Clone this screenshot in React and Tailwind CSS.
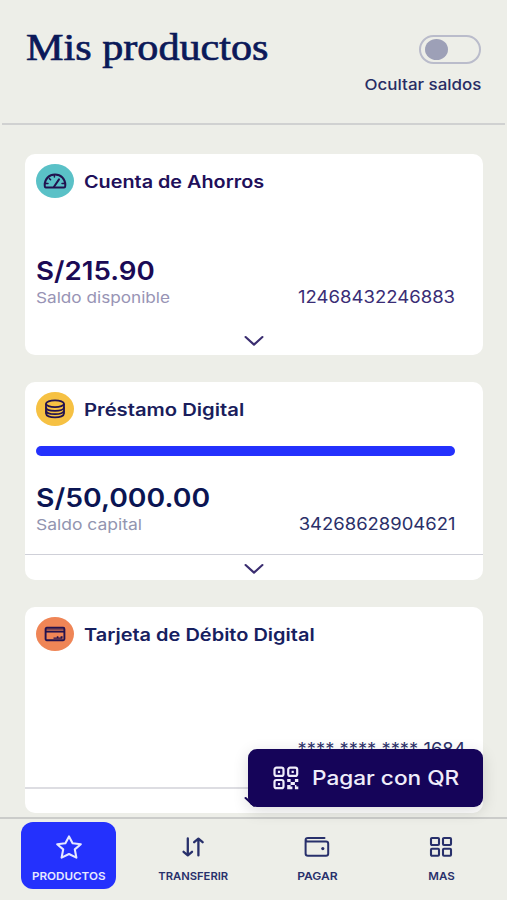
function Chevron() {
  return (
    <svg className="w-[20px] h-[12px]" fill="none" viewBox="0 0 20 12" stroke="currentColor">
      <path strokeLinecap="round" strokeLinejoin="round" strokeWidth={2.1} d="M1.6 2L10 9.6L18.4 2" />
    </svg>
  )
}

function GaugeIcon() {
  return (
    <svg className="w-[24px] h-[18px]" fill="none" viewBox="0 0 24 18" stroke="currentColor" strokeWidth={2} strokeLinecap="round" strokeLinejoin="round">
      <path d="M3 15.5C1.9 15.5 1.7 14.6 1.7 13C1.7 7 6 2.6 12 2.6S22.3 7 22.3 13C22.3 14.6 22.1 15.5 21 15.5Z" />
      <path d="M11 14.8L16 7.4" />
      <path d="M11.4 3.2V5M6.4 6.6L7.6 7.8M3 11.6H5M19 11.6H21" strokeWidth={1.5} />
    </svg>
  )
}

function CoinsIcon() {
  return (
    <svg className="w-[22px] h-[20px]" fill="none" viewBox="0 0 22 20" stroke="currentColor" strokeWidth={1.8}>
      <ellipse cx="11" cy="4.8" rx="9" ry="3.4" />
      <path d="M2 4.8V14.6C2 16.8 6 18.4 11 18.4S20 16.8 20 14.6V4.8" />
      <path d="M2 8.2C2 10.4 6 11.8 11 11.8S20 10.4 20 8.2M2 11.8C2 13.8 6 15.2 11 15.2S20 13.8 20 11.8" />
    </svg>
  )
}

function CardIcon() {
  return (
    <svg className="w-[22px] h-[16px]" fill="none" viewBox="0 0 22 16" stroke="currentColor" strokeWidth={1.9}>
      <rect x="1.6" y="1.7" width="18.8" height="12.6" rx="1.2" />
      <path d="M1.6 5.6H20.4" />
      <path d="M1.6 3.4H20.4" strokeWidth={1} strokeOpacity={0.6} />
      <path d="M9.5 12.2H18.5M12.8 10.9H14.4M16.6 10.9H18.6" strokeWidth={1.3} />
    </svg>
  )
}

function QrIcon() {
  return (
    <svg className="w-[26px] h-[24px] shrink-0" viewBox="0 0 26 24" fill="none" stroke="currentColor" strokeWidth={2.2}>
      <rect x="1.5" y="1.7" width="9" height="8.2" rx="2" />
      <rect x="15.2" y="1.7" width="9" height="8.2" rx="2" />
      <rect x="1.5" y="14" width="9" height="8.2" rx="2" />
      <path d="M4.9 5.8H7.1M18.6 5.8H20.8M4.9 18.1H7.1" />
      <path
        d="M14.2 13H17.6V16H14.2ZM21.9 13H25.3V16H21.9ZM17.6 16H21.9V19H17.6ZM14.2 19H17.6V20.6H19.4V23.2H14.2ZM21.9 19H23.4V20.6H25.3V23.2H21.9Z"
        fill="currentColor"
        stroke="none"
      />
    </svg>
  )
}

function StarIcon() {
  return (
    <svg className="w-[28px] h-[26px]" fill="none" viewBox="0 0 28 26" stroke="currentColor">
      <path strokeLinejoin="round" strokeWidth={2.1}
        d="M14 2.4L17.6 9.2L25.8 10.3L19.8 15.4L21.4 23.6L14 20L6.6 23.6L8.2 15.4L2.2 10.3L10.4 9.2Z" />
    </svg>
  )
}

function TransferIcon() {
  return (
    <svg className="w-[22px] h-[20px]" fill="none" viewBox="0 0 22 20" stroke="currentColor">
      <path strokeLinecap="round" strokeLinejoin="round" strokeWidth={2.3}
        d="M5.8 1.4V18M1.6 14.8L5.8 18.4L10 14.8M16.4 18.4V1.8M12.2 5.2L16.4 1.6L20.6 5.2" />
    </svg>
  )
}

function WalletIcon() {
  return (
    <svg className="w-[26px] h-[22px]" fill="none" viewBox="0 0 26 22" stroke="currentColor" strokeWidth={2}>
      <path strokeLinecap="round" strokeLinejoin="round"
        d="M20.5 2H4C2.5 2 1.6 2.8 1.6 4V17.5C1.6 19 2.5 19.8 4 19.8H22C23.4 19.8 24.2 19 24.2 17.8V7.5C24.2 6.2 23.4 5.5 22 5.5H3.8C2.4 5.5 1.6 5 1.6 3.8" />
      <circle cx="18.8" cy="12.6" r="1.6" fill="currentColor" stroke="none" />
    </svg>
  )
}

function GridIcon() {
  return (
    <svg className="w-[24px] h-[22px]" fill="none" viewBox="0 0 24 22" stroke="currentColor" strokeWidth={2.1}>
      <rect x="2" y="2" width="8" height="7" rx="1" />
      <rect x="14" y="2" width="8" height="7" rx="1" />
      <rect x="2" y="12.8" width="8" height="7" rx="1" />
      <rect x="14" y="12.8" width="8" height="7" rx="1" />
    </svg>
  )
}

function CardHeader({ color, icon, title, titleClass }) {
  return (
    <div className="flex items-center gap-[10px] pl-[11px] pt-[10px]">
      <div className={`w-[38px] h-[34px] rounded-[50%] flex items-center justify-center shrink-0 text-[#22124f] ${color}`}>
        {icon}
      </div>
      <h2 className={`pt-[2px] text-[17px] leading-[24px] font-semibold whitespace-nowrap origin-left ${titleClass}`}>{title}</h2>
    </div>
  )
}

function NavItem({ icon, label, active, labelClass }) {
  return (
    <button className="flex-1 flex justify-center">
      <span
        className={`w-[95px] h-[67px] rounded-[12px] flex flex-col items-center pt-[11px] ${
          active ? "bg-[#2431fd] text-[#e6e8ff]" : "text-[#28306b]"
        }`}
      >
        <span className="h-[28px] flex items-center justify-center">{icon}</span>
        <span className={`mt-[8px] text-[11px] leading-[14px] font-semibold whitespace-nowrap ${labelClass}`}>{label}</span>
      </span>
    </button>
  )
}

export default function App() {
  return (
    <div className="relative w-[507px] h-[900px] overflow-hidden flex flex-col bg-[#edeee8] font-['Inter',sans-serif] text-[#1c1259]">
      <header className="h-[125px] shrink-0 mx-[2px] border-b-2 border-[#d0d1d1] flex justify-between pl-[24px] pr-[24px]">
        <h1 className="mt-[24px] text-[38px] leading-[46px] font-['Liberation_Serif',serif] text-[#0b1959] whitespace-nowrap origin-left scale-x-[1.11] h-[46px] [-webkit-text-stroke:0.7px_#0b1959]">
          Mis productos
        </h1>
        <div className="flex flex-col items-end pt-[35px]">
          <div className="w-[62px] h-[29px] rounded-full border-2 border-[#babccb] flex items-center pl-[4px]">
            <div className="w-[23px] h-[21px] rounded-[50%] bg-[#9da0b7]" />
          </div>
          <span className="mt-[11px] text-[15px] leading-[20px] font-medium text-[#282c64] whitespace-nowrap origin-right scale-x-[1.13]">
            Ocultar saldos
          </span>
        </div>
      </header>

      <main className="flex-1 min-h-0 overflow-hidden pl-[25px] pr-[24px] pt-[29px] flex flex-col">
        <section className="h-[201px] shrink-0 bg-white rounded-[10px]">
          <CardHeader color="bg-[#5ac1c7]" icon={<GaugeIcon />} title="Cuenta de Ahorros" titleClass="text-[#210f5a] scale-x-[1.165]" />
          <div className="mt-[57px] pl-[11px] pr-[28px]">
            <p className="text-[26px] leading-[32px] font-semibold text-[#1b0a55] w-fit origin-left scale-x-[1.065]">S/215.90</p>
            <div className="flex justify-between">
              <span className="text-[15px] leading-[22px] text-[#9894b5] origin-left scale-x-[1.145]">Saldo disponible</span>
              <span className="-mt-[1px] text-[17px] leading-[22px] text-[#3a2d75] origin-right scale-x-[1.09]">12468432246883</span>
            </div>
          </div>
          <div className="mt-[26px] flex justify-center text-[#3a2d70]">
            <Chevron />
          </div>
        </section>

        <section className="mt-[27px] h-[198px] shrink-0 bg-white rounded-[10px]">
          <CardHeader color="bg-[#f6c143]" icon={<CoinsIcon />} title="Préstamo Digital" titleClass="text-[#1a1d5c] scale-x-[1.19]" />
          <div className="mt-[20px] ml-[11px] mr-[28px] h-[10px] rounded-full bg-[#2431fd]" />
          <div className="mt-[26px] pl-[11px] pr-[28px]">
            <p className="text-[26px] leading-[32px] font-semibold text-[#0b1553] w-fit origin-left scale-x-[1.09]">S/50,000.00</p>
            <div className="flex justify-between">
              <span className="text-[15px] leading-[22px] text-[#9295b0] origin-left scale-x-[1.165]">Saldo capital</span>
              <span className="-mt-[1px] text-[17px] leading-[22px] text-[#2b3069] origin-right scale-x-[1.085]">34268628904621</span>
            </div>
          </div>
          <div className="mt-[18px] border-t border-[#cfd0d8] pt-[8px] flex justify-center text-[#3a2d70]">
            <Chevron />
          </div>
        </section>

        <section className="mt-[27px] h-[206px] shrink-0 bg-white rounded-[10px]">
          <CardHeader color="bg-[#ef8556]" icon={<CardIcon />} title="Tarjeta de Débito Digital" titleClass="text-[#16205f] scale-x-[1.175]" />
          <div className="mt-[87px] pr-[18px] flex justify-end">
            <span className="text-[17px] leading-[22px] text-[#2b3069] whitespace-nowrap origin-right scale-x-[1.08]">**** **** **** 1684</span>
          </div>
          <div className="mt-[27px] border-t-2 border-[#dddde2] pt-[7px] flex justify-center text-[#16085a]">
            <Chevron />
          </div>
        </section>
      </main>

      <nav className="h-[83px] shrink-0 border-t-2 border-[#cbccca] pl-[6.5px] pr-[3.5px] pt-[3px] flex">
        <NavItem active icon={<StarIcon />} label="PRODUCTOS" labelClass="scale-x-[1.06]" />
        <NavItem icon={<TransferIcon />} label="TRANSFERIR" labelClass="scale-x-[1.02]" />
        <NavItem icon={<WalletIcon />} label="PAGAR" labelClass="scale-x-[1.1]" />
        <NavItem icon={<GridIcon />} label="MAS" labelClass="scale-x-[1.05]" />
      </nav>

      {/* floating action over the product list */}
      <button className="absolute left-[248px] top-[749px] w-[235px] h-[58px] rounded-[9px] bg-[#150459] text-[#efedfa] flex items-center pl-[25px] gap-[13px] shadow-[0_4px_16px_rgba(0,0,0,0.14)]">
        <QrIcon />
        <span className="text-[20px] leading-[26px] font-medium whitespace-nowrap origin-left scale-x-[1.13]">Pagar con QR</span>
      </button>
    </div>
  )
}
